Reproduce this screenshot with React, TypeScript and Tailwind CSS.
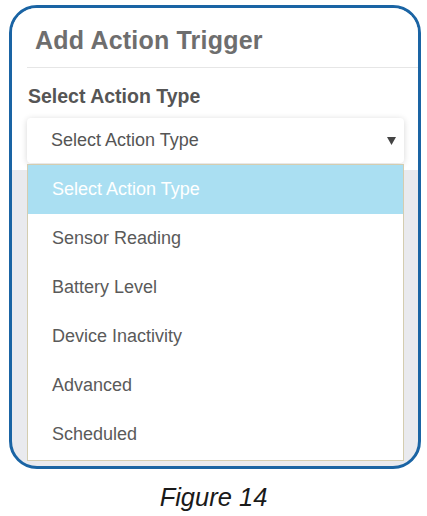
const options = ["Select Action Type", "Sensor Reading", "Battery Level", "Device Inactivity", "Advanced", "Scheduled"];

export default function App() {
  return (
    <div className="w-[427px] h-[516px] bg-white font-['Liberation_Sans',Arial,sans-serif]">
      <div className="pt-[5px] pl-[9px]">
        {/* dialog frame */}
        <div className="relative w-[412px] h-[464px] border-[3px] border-[#1a64a4] rounded-[28px] overflow-hidden bg-[#e9eaee] flex flex-col">
          <div className="h-[162px] bg-white flex flex-col">
            <div className="mt-[18px] pl-[23px] h-[28px] leading-[28px] text-[25px] font-bold text-[#6e6e6e] tracking-[0.2px]">
              Add Action Trigger
            </div>
            <div className="mt-[13px] ml-[15px] h-px bg-[#e6e6e6]" />
            <div className="mt-[17px] pl-[16px] h-[22px] leading-[22px] text-[19.5px] font-bold text-[#555]">
              Select Action Type
            </div>
            <div className="mt-[11px] ml-[15px] w-[377px] h-[45px] rounded-[4px] bg-white shadow-[0_1px_6px_rgba(0,0,0,0.16)] flex items-center justify-between pl-[24px] pr-[8px]">
              <span className="text-[18px] text-[#555]">Select Action Type</span>
              <svg width="9" height="8" viewBox="0 0 9 8" className="mt-[1px]">
                <path d="M0 0 H9 L4.5 8 Z" fill="#444" />
              </svg>
            </div>
          </div>

          {/* open list */}
          <div className="absolute left-[15px] top-[156px] w-[377px] h-[297px] border border-[#d4cdb0] bg-white flex flex-col">
            {options.map((o, i) => (
              <div
                key={o}
                className={
                  i === 0
                    ? "h-[49px] flex items-center pl-[24px] text-[18px] text-white bg-[#aadff2]"
                    : "h-[49px] flex items-center pl-[24px] text-[18px] text-[#5a5a5a]"
                }
              >
                {o}
              </div>
            ))}
          </div>
        </div>
      </div>
      <div className="mt-[13px] text-center text-[25.5px] italic text-[#1a1a1a] leading-[30px]">Figure 14</div>
    </div>
  );
}
